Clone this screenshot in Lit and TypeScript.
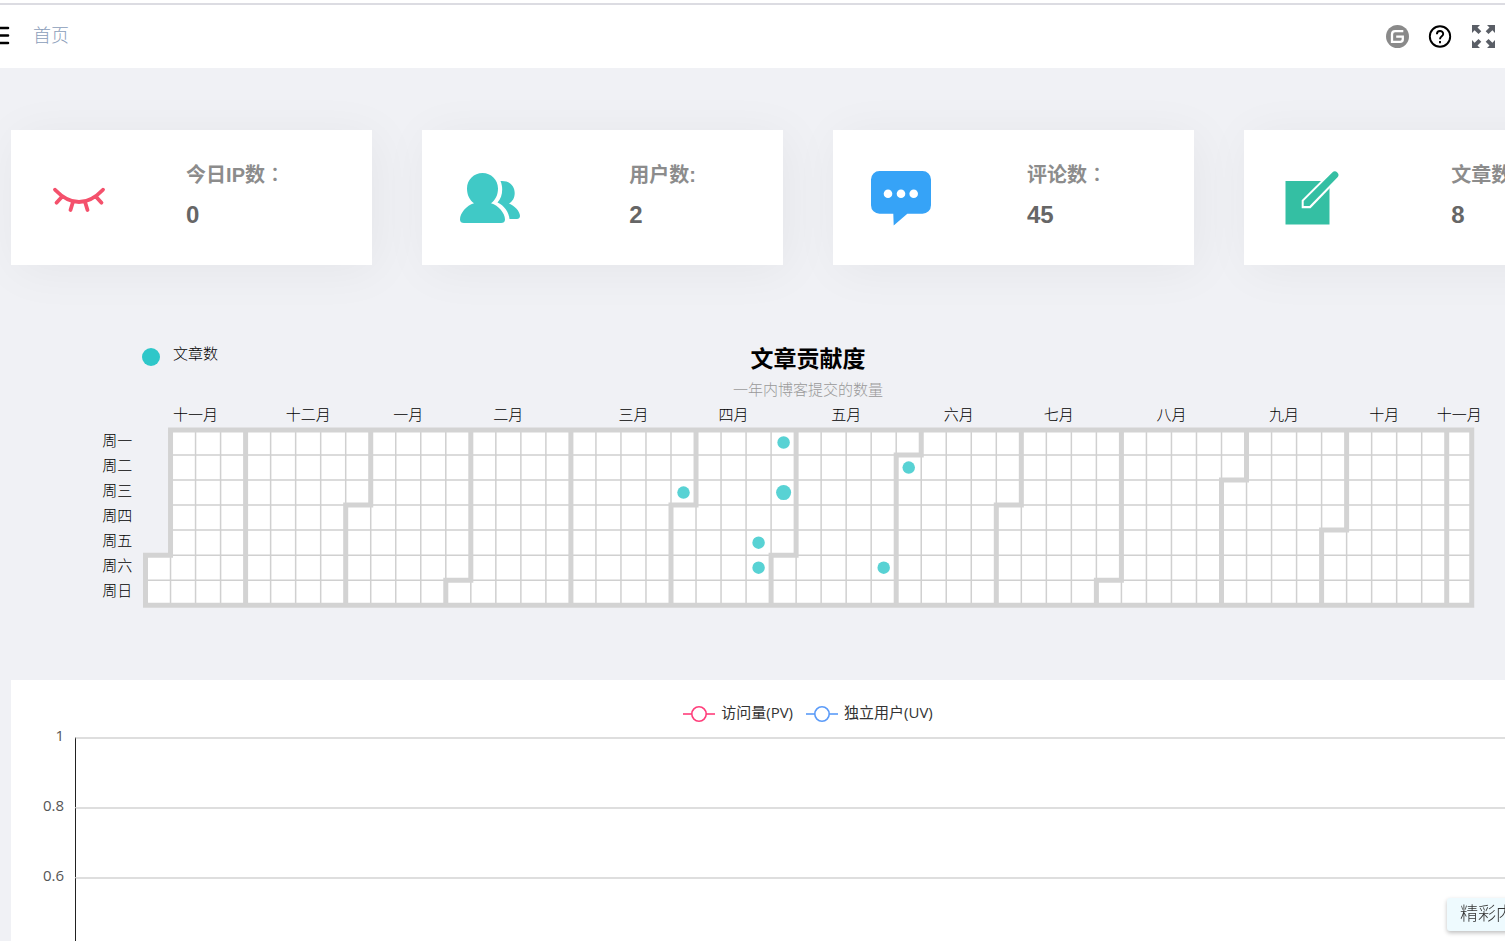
import { LitElement, html, svg, css } from "lit";
import { customElement } from "lit/decorators.js";

const CELL = 20;
const LEFT = 107.5;
const TOP = 24;
const WEEKS = 53;

const weekdays = ["周一", "周二", "周三", "周四", "周五", "周六", "周日"];

// Label and its centre, measured in week columns
const months: [string, number][] = [
  ["十一月", 2], ["十二月", 6.5], ["一月", 10.5], ["二月", 14.5], ["三月", 19.5],
  ["四月", 23.5], ["五月", 28], ["六月", 32.5], ["七月", 36.5], ["八月", 41],
  ["九月", 45.5], ["十月", 49.5], ["十一月", 52.5],
];

// Month borders: column at the top, column at the bottom, row of the step
const borders: [number, number, number][] = [
  [4, 4, 0], [9, 8, 3], [13, 12, 6], [17, 17, 0], [22, 21, 3], [26, 25, 5],
  [31, 30, 1], [35, 34, 3], [39, 38, 6], [44, 43, 2], [48, 47, 4], [52, 52, 0],
];

// Week, weekday, radius
const commits: [number, number, number][] = [
  [21, 2, 5], [25, 0, 5], [25, 2, 6], [24, 4, 5], [24, 5, 5], [30, 1, 5], [29, 5, 5],
];

const px = (col: number) => LEFT + col * CELL;
const py = (row: number) => TOP + row * CELL;

@customElement("contribution-calendar")
export class ContributionCalendar extends LitElement {
  static styles = css`
    :host { display: block; }
    .head { display: grid; grid-template-columns: 1fr auto 1fr; }
    .legend {
      display: flex; align-items: flex-start; gap: 13px; padding-left: 131px;
      font-size: 15px; line-height: 20px; font-weight: 300; color: #000;
    }
    .dot { width: 18px; height: 18px; margin-top: 4px; border-radius: 50%; background: #2ec7c9; }
    .titles { text-align: center; }
    .title { margin: 0; font-size: 23px; line-height: 30px; font-weight: 700; color: #000; }
    .subtitle { margin: 6px 0 0; font-size: 15px; line-height: 20px; font-weight: 300; color: #999; }
    .grid { display: block; width: 100%; height: auto; }
    .cells { fill: #fff; }
    .line { stroke: #d0d0d0; stroke-width: 1.2; fill: none; }
    .border { stroke: #d3d3d3; stroke-width: 4; fill: none; }
    .commit { fill: #58d2d4; }
    .label { font-size: 12px; font-weight: 300; fill: #000; }
    .month { text-anchor: middle; }
    .day { text-anchor: end; }
  `;

  render() {
    const outline = `M${px(1)} ${py(0)}H${px(WEEKS)}V${py(7)}H${px(0)}V${py(5)}H${px(1)}Z`;
    const cols = Array.from({ length: WEEKS - 1 }, (_, i) => `M${px(i + 1)} ${py(0)}V${py(7)}`).join("");
    const rows = Array.from({ length: 6 }, (_, i) => `M${px(i < 4 ? 1 : 0)} ${py(i + 1)}H${px(WEEKS)}`).join("");
    const steps = borders.map(([a, b, r]) => `M${px(a)} ${py(0)}V${py(r)}H${px(b)}V${py(7)}`).join("");
    return html`
      <div class="head">
        <div class="legend"><span class="dot"></span>文章数</div>
        <div class="titles">
          <h2 class="title">文章贡献度</h2>
          <p class="subtitle">一年内博客提交的数量</p>
        </div>
      </div>
      <svg class="grid" viewBox="0 0 1274 176" role="img" aria-label="文章贡献度">
        ${months.map(([name, c]) => svg`<text class="label month" x=${px(c)} y="16">${name}</text>`)}
        ${weekdays.map((name, r) => svg`<text class="label day" x="97" y=${py(r) + 13}>${name}</text>`)}
        <path class="cells" d=${outline}></path>
        <path class="line" d=${cols + rows}></path>
        <path class="border" d=${steps + outline}></path>
        ${commits.map(([c, r, radius]) => svg`<circle class="commit" cx=${px(c + 0.5)} cy=${py(r + 0.5)} r=${radius}></circle>`)}
      </svg>
    `;
  }
}

@customElement("visit-chart")
export class VisitChart extends LitElement {
  static styles = css`
    :host { display: block; background: #fff; padding: 21px 0 24px; }
    .legend { display: flex; justify-content: center; gap: 13px; }
    .item {
      display: flex; align-items: center; gap: 6px; padding: 0; border: 0; background: none;
      font: inherit; font-size: 15px; line-height: 22px; color: #333;
    }
    .mark { display: block; width: 32px; height: 20px; fill: #fff; stroke-width: 1.6; }
    .pv { stroke: #ff3e7b; }
    .uv { stroke: #5b9bf8; }
    .plot { margin-top: 14px; }
    .row { display: grid; grid-template-columns: 53px 1fr; column-gap: 11px; height: 70px; }
    .tick { text-align: right; font-size: 15px; line-height: 20px; margin-top: -12px; color: #555; }
    .band { border-top: 2px solid #dedede; border-left: 1px solid #222; }
  `;

  render() {
    const mark = (cls: string) => html`<svg class="mark ${cls}" viewBox="0 0 32 20">
      <path d="M0 12H32"></path><circle cx="16" cy="12" r="7.2"></circle></svg>`;
    return html`
      <div class="legend">
        <button class="item">${mark("pv")}访问量(PV)</button>
        <button class="item">${mark("uv")}独立用户(UV)</button>
      </div>
      <div class="plot">
        ${["1", "0.8", "0.6", "0.4", "0.2"].map(
          (t) => html`<div class="row"><span class="tick">${t}</span><div class="band"></div></div>`
        )}
      </div>
    `;
  }
}

const icons = {
  eye: svg`<g fill="none" stroke="#f4516c" stroke-width="3.8" stroke-linecap="round">
    <path d="M6 21.700C14 30 22 34 30 34s16-4 24-12.300M13 28.700l-5.500 6M23.700 34.700L21.500 42M36.300 34.700l2.200 7.300M47 28.700l5.500 6"/></g>`,
  users: svg`<g fill="#40c9c6">
    <path d="M22.500 5C31 5 38 11.500 38 20.500C38 27 35.500 32 31 35.200C38.500 37.500 45 45 45 51.500C45 54 43.500 55 41 55H4C1.500 55 0 54 0 51.500C0 45 6.500 37.500 14 35.200C9.500 32 7 27 7 20.500C7 11.500 14 5 22.500 5Z"/>
    <path d="M40.500 13C49 12.300 54.700 17.500 54.700 25C54.700 30 52.500 33.500 49 35.500C54.500 37.500 60 43.500 60 48C60 50 58.500 51 57 51H49.500C49 44 44 37.500 37.500 34.500C42.500 29.500 43.500 20 40.500 13Z"/></g>`,
  message: svg`<path fill="#36a3f7" d="M8.500 3H51.500A8.500 8.500 0 0 1 60 11.500V37.300A8.500 8.500 0 0 1 51.500 45.800H36.300L22.700 57.500L22.300 45.800H8.500A8.500 8.500 0 0 1 0 37.300V11.500A8.500 8.500 0 0 1 8.500 3Z"/>
    <g fill="#fff"><circle cx="17" cy="25.700" r="4.300"/><circle cx="30" cy="25.700" r="4.300"/><circle cx="42.700" cy="25.700" r="4.300"/></g>`,
  edit: svg`<path fill="#34bfa3" d="M3.500 13H47.500V56.500H3.500Z"/>
    <path fill="#fff" d="M19.700 32.300L50 2L60 7.600L28.500 40.200H19.700Z"/>
    <path fill="#34bfa3" d="M21.700 33.100L50.300 4.500A3.530 3.530 0 0 1 55.300 9.500L27.500 38H21.700Z"/>`,
};

@customElement("stat-card")
export class StatCard extends LitElement {
  static properties = { icon: {}, label: {}, value: {} };
  declare icon: keyof typeof icons;
  declare label: string;
  declare value: string;

  static styles = css`
    :host {
      display: flex; align-items: center; justify-content: space-between;
      box-sizing: border-box; min-height: 135px; padding: 0 87px 0 38px;
      background: #fff; box-shadow: 5px 5px 50px rgba(0, 0, 0, 0.05);
    }
    .icon { display: block; width: 60px; height: 60px; }
    .text { margin: 0; padding-bottom: 2px; font-weight: 700; white-space: nowrap; }
    .label { display: block; font-size: 20px; line-height: 24px; color: #8c8c8c; }
    .value { display: block; margin: 12px 0 0; font-size: 24px; line-height: 32px; color: #666; }
    .colon { font-family: "Noto Sans CJK TC", sans-serif; font-weight: 500; }
  `;

  render() {
    const wide = this.label.endsWith("：");
    const name = wide ? this.label.slice(0, -1) : this.label;
    return html`
      <svg class="icon" viewBox="0 0 60 60" aria-hidden="true">${icons[this.icon]}</svg>
      <p class="text">
        <span class="label">${name}${wide ? html`<span class="colon" lang="zh-TW">：</span>` : ""}</span>
        <span class="value">${this.value}</span>
      </p>
    `;
  }
}

@customElement("app-root")
export class AppRoot extends LitElement {
  static styles = css`
    :host {
      display: block; height: 100vh; overflow: hidden; background: #f0f1f5;
      font-family: "Liberation Sans", "Noto Sans CJK SC", sans-serif;
    }
    .strip { height: 3px; background: #fff; border-bottom: 2px solid #dcdce2; }
    .bar {
      display: flex; align-items: center; height: 62px; padding: 0 10px 1px 0; background: #fff;
    }
    .tool {
      display: block; padding: 0; border: 0; background: none; width: 24px; height: 24px;
    }
    .tool svg { display: block; width: 24px; height: 24px; }
    .menu { margin-left: -14px; }
    .crumb {
      margin-left: 23px; font-size: 18px; font-weight: 300; line-height: 24px;
      color: #8a9dba; text-decoration: none;
    }
    .tools { display: flex; gap: 19px; margin-left: auto; }
    .content { margin: 62px -100px 0 11px; }
    .cards { display: grid; grid-template-columns: repeat(4, 1fr); gap: 50px; }
    .calendar { margin-top: 79px; }
    .chart { margin-top: 60px; font-family: "Open Sans", "Noto Sans CJK SC", sans-serif; }
    .tip {
      position: fixed; right: -40px; bottom: 10px; height: 33px; padding: 0 13px;
      border: 0; border-radius: 3px; background: #eefafe; color: #333;
      box-shadow: 0 2px 4px rgba(0, 0, 0, 0.25);
      font-family: inherit; font-size: 18px; font-weight: 300; line-height: 33px; white-space: nowrap;
    }
  `;

  render() {
    return html`
      <div class="strip"></div>
      <header class="bar">
        <button class="tool menu" aria-label="菜单">
          <svg viewBox="0 0 24 24"><path d="M2 4H22M2 11.500H22M2 19H22" stroke="#000" stroke-width="2.600" stroke-linecap="round"/></svg>
        </button>
        <a class="crumb" href="#">首页</a>
        <div class="tools">
          <button class="tool" aria-label="Gitee">
            <svg viewBox="0 0 24 24"><circle cx="12.500" cy="12.500" r="11.500" fill="#8a8a8a"/>
              <path d="M18.300 7.200H10.200Q7 7.200 7 10.400V17.900H15.200Q17.800 17.900 17.800 15.300V12.700H11.200" fill="none" stroke="#fff" stroke-width="2.300"/></svg>
          </button>
          <button class="tool" aria-label="帮助">
            <svg viewBox="0 0 24 24" fill="none" stroke="#000" stroke-width="1.900"><circle cx="12" cy="12.500" r="10.200"/>
              <path d="M8.900 10.300C8.900 5.900 15.200 6 15.200 10C15.200 12.500 12 12.200 12 15.300M12 17.100V19.300"/></svg>
          </button>
          <button class="tool" aria-label="全屏">
            <svg viewBox="0 0 24 24" fill="#5a5e66"><path d="M1 1H9L6.500 3.500L10.300 7.300L7.500 10.100L3.600 6.300L1 9Z"/>
              <path d="M24 1H16L18.500 3.500L14.700 7.300L17.500 10.100L21.400 6.300L24 9Z"/>
              <path d="M1 24H9L6.500 21.500L10.300 17.700L7.500 14.900L3.600 18.700L1 16Z"/>
              <path d="M24 24H16L18.500 21.500L14.700 17.700L17.500 14.900L21.400 18.700L24 16Z"/></svg>
          </button>
        </div>
      </header>
      <main class="content">
        <section class="cards">
          <stat-card icon="eye" label="今日IP数：" value="0"></stat-card>
          <stat-card icon="users" label="用户数:" value="2"></stat-card>
          <stat-card icon="message" label="评论数：" value="45"></stat-card>
          <stat-card icon="edit" label="文章数:" value="8"></stat-card>
        </section>
        <contribution-calendar class="calendar"></contribution-calendar>
        <visit-chart class="chart"></visit-chart>
      </main>
      <button class="tip">精彩内容</button>
    `;
  }
}
